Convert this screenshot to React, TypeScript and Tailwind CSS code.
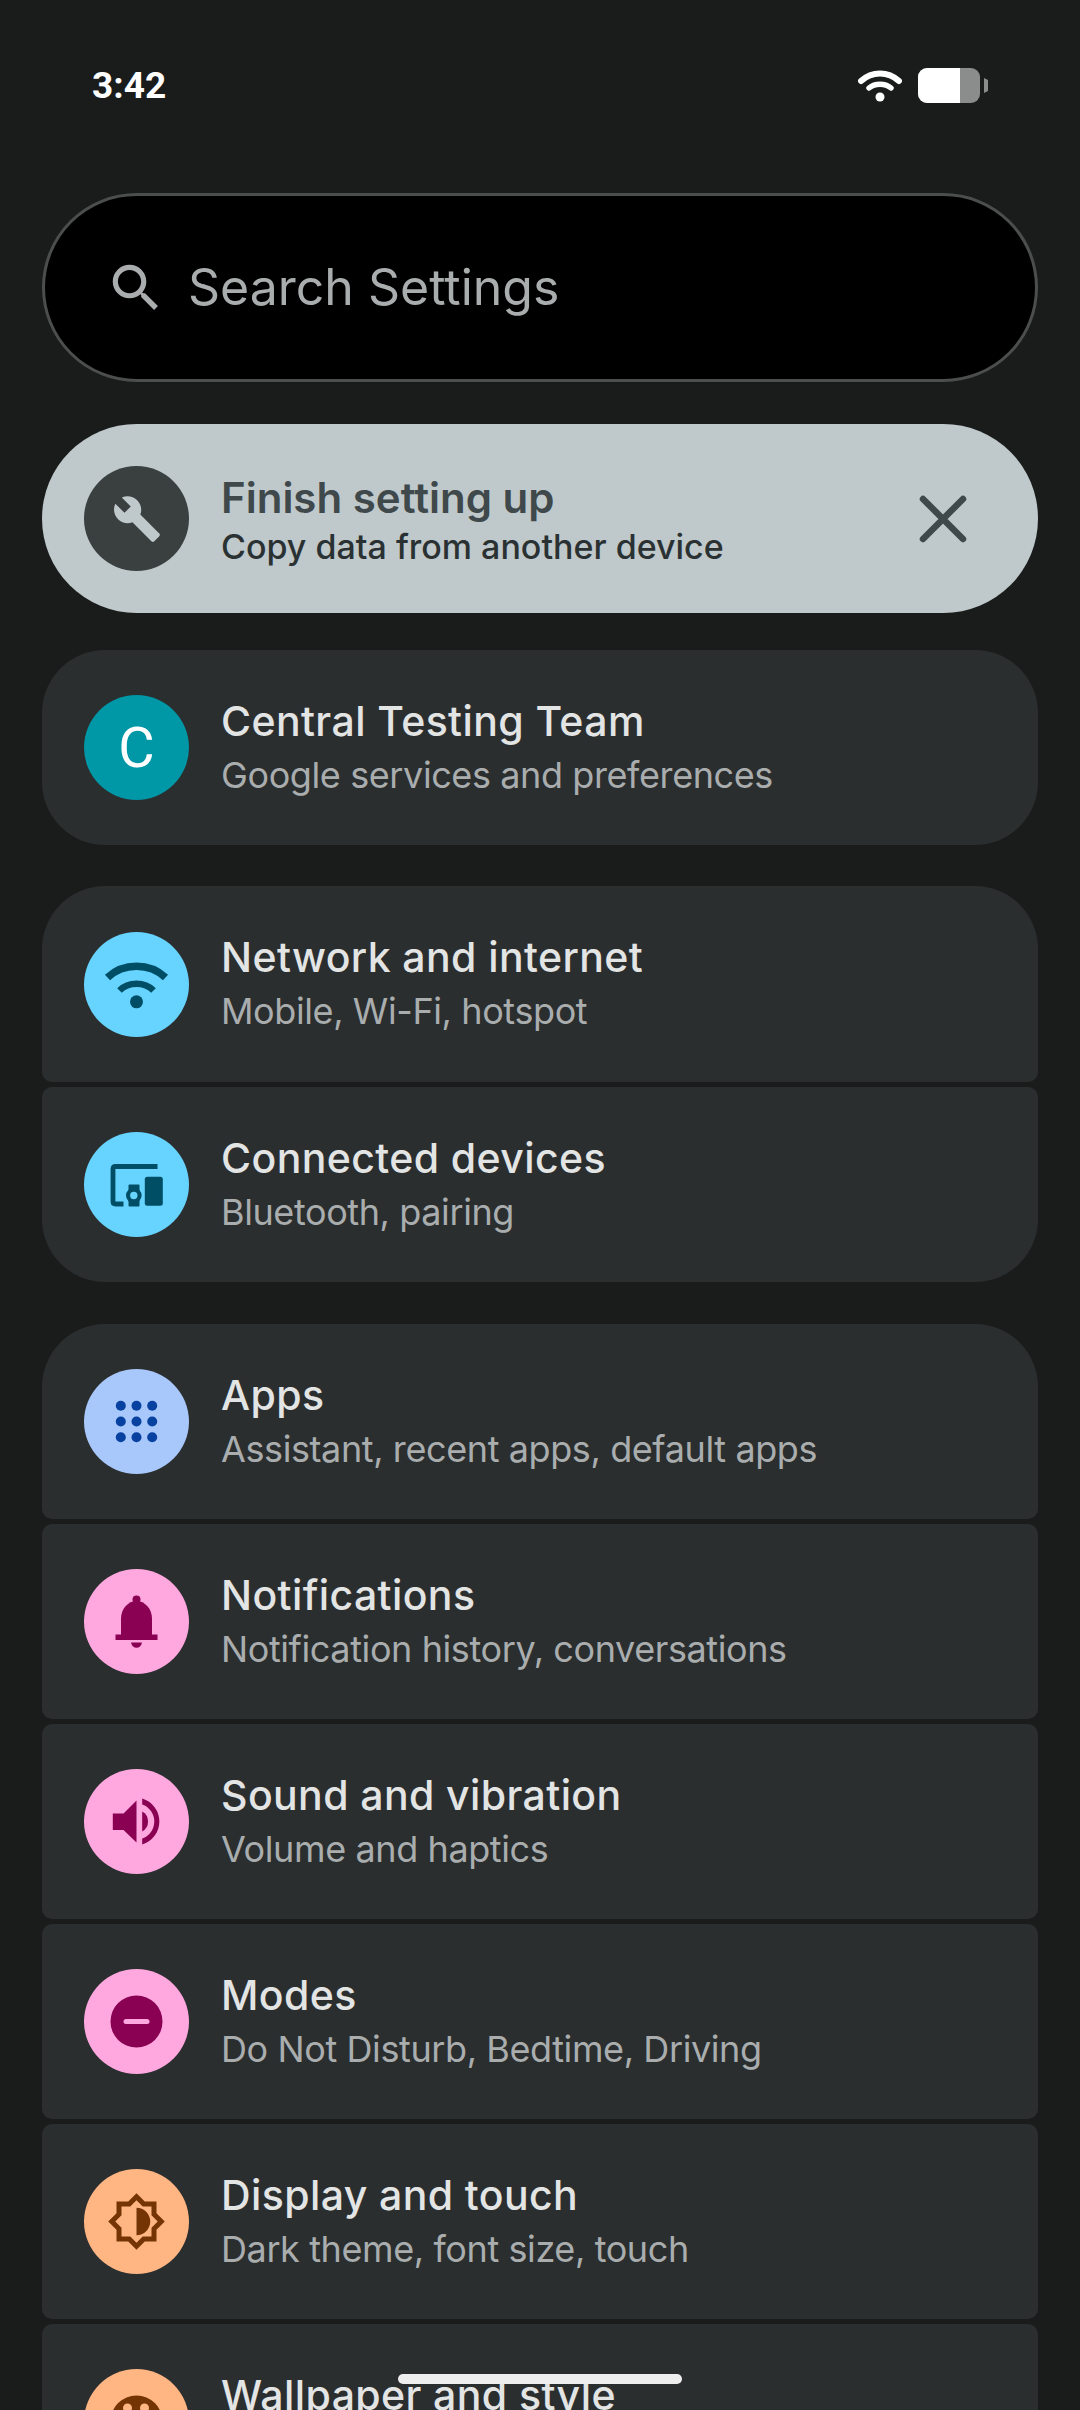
import React from 'react';

const font = 'Inter, "Noto Sans", sans-serif';

function IconCircle({ bg, children }: { bg: string; children: React.ReactNode }) {
  return (
    <div className={`w-[105px] h-[105px] rounded-full shrink-0 flex items-center justify-center ${bg}`}>
      <svg width="105" height="105" viewBox="-52.5 -52.5 105 105">{children}</svg>
    </div>
  );
}

function WifiGlyph() {
  return (
    <g fill="none" stroke="#004e66">
      <path d="M-29 -7 C-13 -22 13 -22 29 -7" strokeWidth="7.5" />
      <path d="M-17 6 C-8 -3 8 -3 17 6" strokeWidth="6.5" />
      <circle cx="0" cy="17.3" r="6.5" fill="#004e66" stroke="none" />
    </g>
  );
}

function DevicesGlyph() {
  return (
    <g fill="#004e66">
      <path d="M21 -18 H-21 Q-23.5 -18 -23.5 -15.5 V17 Q-23.5 19.5 -21 19.5 H-13" fill="none" stroke="#004e66" strokeWidth="4.8" />
      <rect x="8.3" y="-7.7" width="18" height="29" rx="2.5" />
      <rect x="-8" y="0" width="11" height="22" rx="1" />
      <circle cx="-2.7" cy="11" r="7.8" />
      <circle cx="-2.7" cy="11" r="3.7" fill="#67d4ff" />
    </g>
  );
}

function AppsGlyph() {
  const spots = [-15.7, 0, 15.7];
  return (
    <g fill="#0842a0">
      {spots.map(y => spots.map(x => <circle key={`${x}${y}`} cx={x} cy={y} r="5" />))}
    </g>
  );
}

function BellGlyph() {
  return (
    <g fill="#8a0053">
      <circle cx="0" cy="-22" r="4" />
      <path d="M-15.5 14 V-3 C-15.5 -13 -8 -20.5 0 -20.5 C8 -20.5 15.5 -13 15.5 -3 V14 Z" />
      <rect x="-21" y="13" width="42" height="5.5" />
      <path d="M-5.5 21 H5.5 C5 24.5 2.5 26.3 0 26.3 C-2.5 26.3 -5 24.5 -5.5 21 Z" />
    </g>
  );
}

function SoundGlyph() {
  return (
    <g fill="#8a0053">
      <path d="M-23.7 -8 H-13 L0 -21 V21 L-13 8.5 H-23.7 Z" />
      <path d="M5.7 -10 A11.5 11.5 0 0 1 5.7 10 Z" />
      <path d="M5.7 -23 A24 24 0 0 1 5.7 23 V17 A18 18 0 0 0 5.7 -17 Z" />
    </g>
  );
}

function ModesGlyph() {
  return (
    <g>
      <circle cx="0" cy="0" r="26" fill="#8a0053" />
      <rect x="-13" y="-2.5" width="26" height="5" rx="2.5" fill="#ffa8e0" />
    </g>
  );
}

function DisplayGlyph() {
  return (
    <path
      transform="translate(-30 -30) scale(2.5)"
      fill="#753403"
      d="M20 8.69V4h-4.69L12 .69 8.69 4H4v4.69L.69 12 4 15.31V20h4.69L12 23.31 15.31 20H20v-4.69L23.31 12 20 8.69zm-2 5.79V18h-3.52L12 20.48 9.52 18H6v-3.52L3.52 12 6 9.52V6h3.52L12 3.52 14.48 6H18v3.52L20.48 12 18 14.48zM12 6.5v11c3.03 0 5.5-2.47 5.5-5.5S15.03 6.5 12 6.5z"
    />
  );
}

function WallpaperGlyph() {
  return (
    <g>
      <circle cx="0" cy="0" r="26" fill="#753403" />
      <circle cx="-9" cy="-13.5" r="4.5" fill="#ffb683" />
      <circle cx="8" cy="-13.5" r="4.5" fill="#ffb683" />
    </g>
  );
}

interface RowProps {
  icon: React.ReactNode;
  title: string;
  subtitle?: string;
  className: string;
}

function Row({ icon, title, subtitle, className }: RowProps) {
  return (
    <div className={`bg-[#2b2e2f] pl-[42px] pr-[32px] flex items-center gap-[32px] shrink-0 ${className}`}>
      {icon}
      <div className="flex flex-col min-w-0 -mt-[2px]">
        <span className="text-[41px] leading-[56px] font-medium text-[#e3e5e5] whitespace-nowrap tracking-[0.4px]">{title}</span>
        <span className="text-[36px] leading-[52px] text-[#a9adae] whitespace-nowrap tracking-[-0.4px]">{subtitle}</span>
      </div>
    </div>
  );
}

export default function App() {
  return (
    <div className="relative w-[1080px] h-[2410px] overflow-hidden bg-[#1a1c1c]" style={{ fontFamily: font }}>
      {/* status bar */}
      <div className="h-[193px] px-[92px] pt-[64px] flex items-start justify-between">
        <span className="text-[37px] leading-[44px] font-bold text-white" style={{ fontFamily: 'Roboto, sans-serif' }}>3:42</span>
        <div className="flex items-center gap-[16px] mt-[4px]">
          <svg width="44" height="32" viewBox="0 0 44 32" fill="none">
            <path d="M3 11 C14 1 30 1 41 11" stroke="#fff" strokeWidth="6" strokeLinecap="round" />
            <path d="M11 18 C17 13 27 13 33 18" stroke="#fff" strokeWidth="5.5" strokeLinecap="round" />
            <circle cx="22" cy="27" r="4.5" fill="#fff" />
          </svg>
          <svg width="70" height="35" viewBox="0 0 70 35">
            <rect x="0" y="0" width="62" height="35" rx="9" fill="#8b8d8d" />
            <path d="M9 0 H42 V35 H9 A9 9 0 0 1 0 26 V9 A9 9 0 0 1 9 0 Z" fill="#fff" />
            <path d="M66 10 L70 12 V23 L66 25 Z" fill="#8b8d8d" />
          </svg>
        </div>
      </div>

      <div className="px-[42px] flex flex-col">
        {/* search */}
        <div className="h-[189px] rounded-full bg-black border-[3px] border-[#4c4e4e] flex items-center pl-[60px] gap-[21px]">
          <svg width="62" height="62" viewBox="0 0 24 24" fill="#a9adae" className="shrink-0">
            <path d="M15.5 14h-.79l-.28-.27C15.41 12.59 16 11.11 16 9.5 16 5.91 13.09 3 9.5 3S3 5.91 3 9.5 5.91 16 9.5 16c1.61 0 3.09-.59 4.23-1.57l.27.28v.79l5 4.99L20.49 19l-4.99-5zm-6 0C7.01 14 5 11.99 5 9.5S7.01 5 9.5 5 14 7.01 14 9.5 11.99 14 9.5 14z" />
          </svg>
          <span className="text-[50px] text-[#a9adae]">Search Settings</span>
        </div>

        {/* setup banner */}
        <div className="mt-[42px] h-[189px] rounded-full bg-[#bfc8ca] pl-[42px] pr-[70px] flex items-center gap-[32px]">
          <div className="w-[105px] h-[105px] rounded-full bg-[#3a3f40] shrink-0 flex items-center justify-center">
            <svg width="50" height="50" viewBox="0 0 24 24" fill="#bfc8ca">
              <path d="M22.7 19l-9.1-9.1c.9-2.3.4-5-1.5-6.9-2-2-5-2.4-7.4-1.3L9 6 6 9 1.6 4.7C.4 7.1.9 10.1 2.9 12.1c1.9 1.9 4.6 2.4 6.9 1.5l9.1 9.1c.4.4 1 .4 1.4 0l2.3-2.3c.5-.4.5-1.1.1-1.4z" />
            </svg>
          </div>
          <div className="flex flex-col flex-1 mt-[5px]">
            <span className="text-[42px] leading-[52px] font-semibold text-[#3f484a]">Finish setting up</span>
            <span className="text-[34px] leading-[46px] font-medium text-[#2a3133]">Copy data from another device</span>
          </div>
          <svg width="48" height="48" viewBox="0 0 48 48" fill="none" stroke="#3f484a" strokeWidth="6.5" strokeLinecap="round" className="shrink-0 -ml-[1px] mr-[1px]">
            <path d="M4 4 L44 44 M44 4 L4 44" />
          </svg>
        </div>

        {/* account */}
        <Row
          className="mt-[37px] h-[195px] rounded-[63px]"
          icon={
            <div className="w-[105px] h-[105px] rounded-full bg-[#0097a7] shrink-0 flex items-center justify-center text-[56px] text-white" style={{ fontFamily: 'Roboto, sans-serif' }}>C</div>
          }
          title="Central Testing Team"
          subtitle="Google services and preferences"
        />

        {/* connectivity group */}
        <div className="mt-[41px] flex flex-col gap-[5px]">
          <Row className="h-[196px] rounded-t-[63px] rounded-b-[10px]" icon={<IconCircle bg="bg-[#67d4ff]"><WifiGlyph /></IconCircle>} title="Network and internet" subtitle="Mobile, Wi-Fi, hotspot" />
          <Row className="h-[195px] rounded-b-[63px] rounded-t-[10px]" icon={<IconCircle bg="bg-[#67d4ff]"><DevicesGlyph /></IconCircle>} title="Connected devices" subtitle="Bluetooth, pairing" />
        </div>

        {/* main group */}
        <div className="mt-[42px] flex flex-col gap-[5px]">
          <Row className="h-[195px] rounded-t-[63px] rounded-b-[10px]" icon={<IconCircle bg="bg-[#a8c7fa]"><AppsGlyph /></IconCircle>} title="Apps" subtitle="Assistant, recent apps, default apps" />
          <Row className="h-[195px] rounded-[10px]" icon={<IconCircle bg="bg-[#ffa8e0]"><BellGlyph /></IconCircle>} title="Notifications" subtitle="Notification history, conversations" />
          <Row className="h-[195px] rounded-[10px]" icon={<IconCircle bg="bg-[#ffa8e0]"><SoundGlyph /></IconCircle>} title="Sound and vibration" subtitle="Volume and haptics" />
          <Row className="h-[195px] rounded-[10px]" icon={<IconCircle bg="bg-[#ffa8e0]"><ModesGlyph /></IconCircle>} title="Modes" subtitle="Do Not Disturb, Bedtime, Driving" />
          <Row className="h-[195px] rounded-[10px]" icon={<IconCircle bg="bg-[#ffb683]"><DisplayGlyph /></IconCircle>} title="Display and touch" subtitle="Dark theme, font size, touch" />
          <Row className="h-[195px] rounded-[10px]" icon={<IconCircle bg="bg-[#ffb683]"><WallpaperGlyph /></IconCircle>} title="Wallpaper and style" subtitle="Wallpapers, palette" />
        </div>
      </div>

      {/* gesture bar */}
      <div className="absolute left-[398px] top-[2374px] w-[284px] h-[10px] rounded-full bg-[#eeeeee]" />
    </div>
  );
}
